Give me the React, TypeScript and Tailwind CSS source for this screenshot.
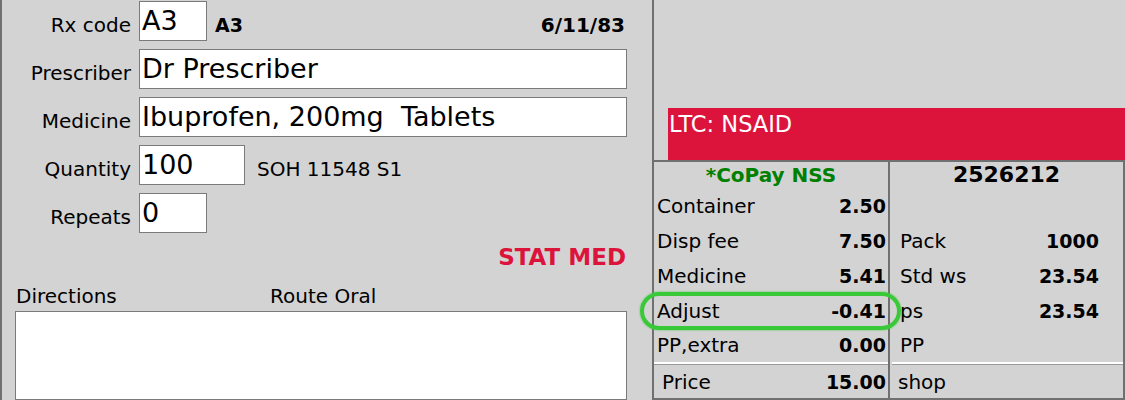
import React from "react";

function Field({ value, width }: { value: string; width: string }) {
  return (
    <div
      className={`${width} h-[40px] border border-[#7a7a7a] bg-white pl-[2px] text-[27px] leading-[37px] text-black whitespace-pre`}
    >
      {value}
    </div>
  );
}

function FormRow({ label, children }: { label: string; children: React.ReactNode }) {
  return (
    <div className="flex items-end h-[40px]">
      <div className="w-[129px] shrink-0 text-right text-[20px] leading-[24px] pb-[4px] mr-[8px]">
        {label}
      </div>
      {children}
    </div>
  );
}

function CostRow({ label, value, cls = "" }: { label: string; value?: string; cls?: string }) {
  return (
    <div className={`flex items-center justify-between ${cls}`}>
      <span className="text-[20px] leading-[24px]">{label}</span>
      {value && <span className="text-[19px] font-bold leading-[24px]">{value}</span>}
    </div>
  );
}

export default function App() {
  return (
    <div className="relative flex w-[1125px] h-[400px] overflow-hidden bg-[#d3d3d3] font-['DejaVu_Sans',sans-serif] text-black">
      {/* left form */}
      <div className="w-[652px] shrink-0 border-l-2 border-[#707070] pt-[1px] pr-[25px] flex flex-col">
        <div className="flex flex-col gap-[8px]">
          <FormRow label="Rx code">
            <Field value="A3" width="w-[68px]" />
            <span className="ml-[8px] pb-[4px] text-[19px] font-bold leading-[24px]">A3</span>
            <span className="flex-1 text-right pr-[2px] pb-[4px] text-[20px] font-bold leading-[24px]">
              6/11/83
            </span>
          </FormRow>
          <FormRow label="Prescriber">
            <Field value="Dr Prescriber" width="flex-1" />
          </FormRow>
          <FormRow label="Medicine">
            <Field value="Ibuprofen, 200mg  Tablets" width="flex-1" />
          </FormRow>
          <FormRow label="Quantity">
            <Field value="100" width="w-[106px]" />
            <span className="ml-[12px] pb-[4px] text-[20px] leading-[24px]">SOH 11548 S1</span>
          </FormRow>
          <FormRow label="Repeats">
            <Field value="0" width="w-[68px]" />
          </FormRow>
        </div>
        <div className="mt-[11px] text-right pr-[1px] text-[23px] font-bold leading-[26px] text-[#dc143c]">
          STAT MED
        </div>
        <div className="mt-[14px] pl-[14px] flex text-[20px] leading-[24px]">
          <span className="w-[254px]">Directions</span>
          <span>Route&nbsp;Oral</span>
        </div>
        <div className="mt-[3px] ml-[13px] h-[100px] border border-[#7a7a7a] bg-white" />
      </div>

      {/* right panel */}
      <div className="flex-1 border-l-2 border-[#707070] flex flex-col">
        <div className="h-[108px]" />
        <div className="ml-[14px] h-[52px] bg-[#dc143c] pl-[1px] pt-[2px] text-[22.5px] leading-[28px] text-white">
          LTC: NSAID
        </div>
        <div className="flex-1 flex border-t-2 border-r-2 border-b-2 border-[#707070]">
          <div className="w-[234px] flex flex-col">
            <div className="h-[26px] flex items-center justify-center text-[20px] font-bold leading-[24px] text-[#008000]">
              *CoPay NSS
            </div>
            <div className="pl-[3px] pr-[2px]">
              <CostRow label="Container" value="2.50" cls="h-[35px]" />
              <CostRow label="Disp fee" value="7.50" cls="h-[35px]" />
              <CostRow label="Medicine" value="5.41" cls="h-[35px]" />
              <CostRow label="Adjust" value="-0.41" cls="h-[35px]" />
              <CostRow label="PP,extra" value="0.00" cls="h-[34px]" />
            </div>
            <div className="h-[3px] border-t-2 border-white border-b border-b-[#9a9a9a]" />
            <div className="flex-1 pl-[8px] pr-[2px] flex flex-col justify-center">
              <CostRow label="Price" value="15.00" />
            </div>
          </div>
          <div className="flex-1 border-l-2 border-[#707070] flex flex-col">
            <div className="h-[26px] flex items-center justify-center text-[22px] font-bold leading-[26px]">
              2526212
            </div>
            <div className="pl-[10px] pr-[24px]">
              <div className="h-[35px]" />
              <CostRow label="Pack" value="1000" cls="h-[35px]" />
              <CostRow label="Std ws" value="23.54" cls="h-[35px]" />
              <CostRow label="ps" value="23.54" cls="h-[35px]" />
              <CostRow label="PP" cls="h-[34px]" />
            </div>
            <div className="ml-[2px] h-[3px] border-t-2 border-white border-b border-b-[#9a9a9a]" />
            <div className="flex-1 pl-[8px] flex items-center">
              <span className="text-[20px] leading-[24px]">shop</span>
            </div>
          </div>
        </div>
      </div>

      {/* annotation ring around Adjust */}
      <div className="absolute left-[640px] top-[292px] w-[261px] h-[38px] rounded-full border-[4px] border-[#38c838] shadow-[0_0_2px_#38c838]" />
    </div>
  );
}
